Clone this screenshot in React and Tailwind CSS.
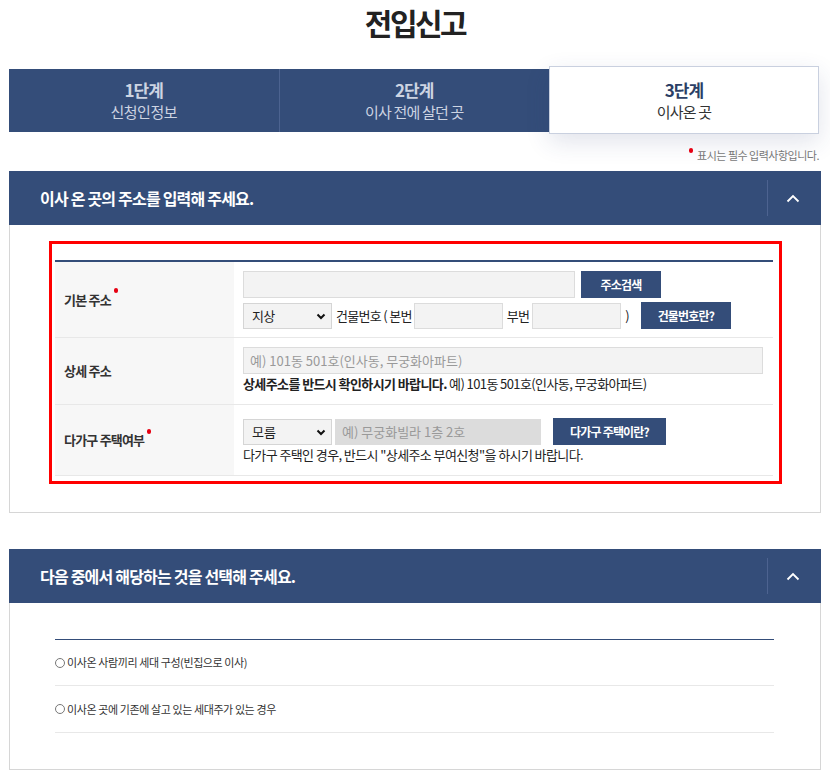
import React from "react";

const F = { fontFamily: '"Noto Sans CJK KR", "Noto Sans", sans-serif' };

function Chevron() {
  return (
    <svg width="14" height="9" viewBox="0 0 14 9" fill="none">
      <path d="M1.5 7.5 L7 2 L12.5 7.5" stroke="white" strokeWidth="1.8" />
    </svg>
  );
}

function Select({ value }) {
  return (
    <div className="relative w-[89px] h-[26px] bg-[#f3f3f3] border border-[#d5d5d5] flex items-center pl-[8px] text-[13px] text-[#222]">
      {value}
      <svg className="absolute right-[5px] top-[9px]" width="10" height="7" viewBox="0 0 10 7" fill="none">
        <path d="M1.5 1.5 L5 5 L8.5 1.5" stroke="#111" strokeWidth="2" />
      </svg>
    </div>
  );
}

function Btn({ children, w }) {
  return (
    <div className={`${w} h-[27px] bg-[#344d79] text-white text-[12px] font-bold tracking-[-0.8px] flex items-center justify-center`}>
      {children}
    </div>
  );
}

function SectionHeader({ title }) {
  return (
    <div className="h-[54px] bg-[#344d79] flex items-center">
      <div className="flex-1 pl-[31px] text-white text-[16px] font-bold tracking-[-0.8px]">{title}</div>
      <div className="h-[36px] w-px bg-[#4d6390]"></div>
      <div className="w-[53px] flex justify-center pr-[4px]">
        <Chevron />
      </div>
    </div>
  );
}

function Dot() {
  return <span className="inline-block w-[4px] h-[5px] rounded-full bg-[#e60012] ml-[3px] mb-[18px]"></span>;
}

export default function App() {
  return (
    <div style={F} className="w-[830px] bg-white text-[#222]">
      <div className="h-[66px] flex justify-center items-start">
        <div className="px-[4px] text-[30px] font-bold tracking-[-2.5px] text-[#222] leading-[44px]">전입신고</div>
      </div>

      <div className="mx-[9px] flex items-center h-[68px]">
        <div className="flex-1 h-[63px] bg-[#344d79] flex">
          <div className="flex-1 flex flex-col items-center justify-center border-r border-[#4c6390]">
            <div className="text-[17px] font-bold tracking-[-1px] text-[#cdd4e2] leading-[22px]">1단계</div>
            <div className="text-[15px] tracking-[-0.5px] text-[#cdd4e2] leading-[21px]">신청인정보</div>
          </div>
          <div className="flex-1 flex flex-col items-center justify-center">
            <div className="text-[17px] font-bold tracking-[-1px] text-[#cdd4e2] leading-[22px]">2단계</div>
            <div className="text-[15px] tracking-[-0.8px] text-[#cdd4e2] leading-[21px]">이사 전에 살던 곳</div>
          </div>
        </div>
        <div className="w-[270px] h-[68px] bg-white border border-[#c9d0df] shadow-[0_8px_24px_rgba(40,60,110,0.14)] flex flex-col items-center justify-center mr-[2px]">
          <div className="text-[17px] font-bold tracking-[-1px] text-[#2c3f66] leading-[22px]">3단계</div>
          <div className="text-[15px] tracking-[-0.8px] text-[#333] leading-[21px]">이사온 곳</div>
        </div>
      </div>

      <div className="h-[37px] flex justify-end items-start pr-[11px] pt-[14px]">
        <span className="w-[4px] h-[5px] rounded-full bg-[#e60012] mr-[4px]"></span>
        <span className="text-[11px] tracking-[-0.5px] text-[#777] leading-[14px]">표시는 필수 입력사항입니다.</span>
      </div>

      <div className="mx-[9px]">
        <SectionHeader title="이사 온 곳의 주소를 입력해 주세요." />
        <div className="border border-t-0 border-[#d6d6d6] pt-[16px] pb-[28px] pl-[39px]">
          <div className="w-[733px] border-[3px] border-[#f00] pt-[16px] pb-[5px] pl-[3px] pr-[6px]">
            <div className="border-t-[2px] border-[#344d79]">
              {/* row 1 */}
              <div className="flex h-[76px] border-b border-[#e8e8e8]">
                <div className="w-[179px] bg-[#f7f7f7] flex items-center pl-[9px] text-[13px] font-bold tracking-[-0.8px] text-[#333]">
                  기본 주소<Dot />
                </div>
                <div className="flex-1 pl-[9px] pt-[9px] flex flex-col gap-[4px]">
                  <div className="flex gap-[6px]">
                    <div className="w-[332px] h-[27px] bg-[#f3f3f3] border border-[#dcdcdc]"></div>
                    <Btn w="w-[80px]">주소검색</Btn>
                  </div>
                  <div className="flex items-center text-[13px] tracking-[-0.7px] text-[#222]">
                    <Select value="지상" />
                    <span className="ml-[4px] mr-[2px]">건물번호 ( 본번</span>
                    <div className="w-[89px] h-[26px] bg-[#f3f3f3] border border-[#dcdcdc]"></div>
                    <span className="ml-[4px] mr-[3px]">부번</span>
                    <div className="w-[89px] h-[26px] bg-[#f3f3f3] border border-[#dcdcdc]"></div>
                    <span className="ml-[4px] mr-[12px]">)</span>
                    <Btn w="w-[90px]">건물번호란?</Btn>
                  </div>
                </div>
              </div>
              {/* row 2 */}
              <div className="flex h-[67px] border-b border-[#e8e8e8]">
                <div className="w-[179px] bg-[#f7f7f7] flex items-center pl-[9px] text-[13px] font-bold tracking-[-0.8px] text-[#333]">
                  상세 주소
                </div>
                <div className="flex-1 pl-[9px] pt-[9px]">
                  <div className="w-[520px] h-[27px] bg-[#f3f3f3] border border-[#dcdcdc] flex items-center pl-[6px] text-[13px] text-[#999]">
                    예) 101동 501호(인사동, 무궁화아파트)
                  </div>
                  <div className="mt-[1px] text-[13px] tracking-[-0.6px] text-[#222] leading-[18px]">
                    <span className="font-bold">상세주소를 반드시 확인하시기 바랍니다.</span> 예) 101동 501호(인사동, 무궁화아파트)
                  </div>
                </div>
              </div>
              {/* row 3 */}
              <div className="flex h-[71px] border-b border-[#e8e8e8]">
                <div className="w-[179px] bg-[#f7f7f7] flex items-center pl-[9px] text-[13px] font-bold tracking-[-0.8px] text-[#333]">
                  다가구 주택여부<Dot />
                </div>
                <div className="flex-1 pl-[9px] pt-[13px]">
                  <div className="flex items-center">
                    <Select value="모름" />
                    <div className="ml-[3px] w-[206px] h-[26px] bg-[#dcdcdc] flex items-center pl-[7px] text-[13px] text-[#999]">
                      예) 무궁화빌라 1층 2호
                    </div>
                    <div className="ml-[12px]">
                      <Btn w="w-[113px]">다가구 주택이란?</Btn>
                    </div>
                  </div>
                  <div className="mt-[1px] text-[13px] tracking-[-0.6px] text-[#222] leading-[18px]">
                    다가구 주택인 경우, 반드시 "상세주소 부여신청"을 하시기 바랍니다.
                  </div>
                </div>
              </div>
            </div>
          </div>
        </div>
      </div>

      <div className="mx-[9px] mt-[36px]">
        <SectionHeader title="다음 중에서 해당하는 것을 선택해 주세요." />
        <div className="border border-t-0 border-[#d6d6d6] pt-[36px] pb-[36px] pl-[45px] pr-[46px]">
          <div className="border-t border-[#344d79]">
            <div className="h-[46px] border-b border-[#e8e8e8] flex items-center text-[11px] tracking-[-0.4px] text-[#333]">
              <span className="w-[10px] h-[10px] rounded-full border border-[#777] mr-[2px]"></span>
              이사온 사람끼리 세대 구성(빈집으로 이사)
            </div>
            <div className="h-[47px] border-b border-[#e8e8e8] flex items-center text-[11px] tracking-[-0.4px] text-[#333]">
              <span className="w-[10px] h-[10px] rounded-full border border-[#777] mr-[2px]"></span>
              이사온 곳에 기존에 살고 있는 세대주가 있는 경우
            </div>
          </div>
        </div>
      </div>
    </div>
  );
}
